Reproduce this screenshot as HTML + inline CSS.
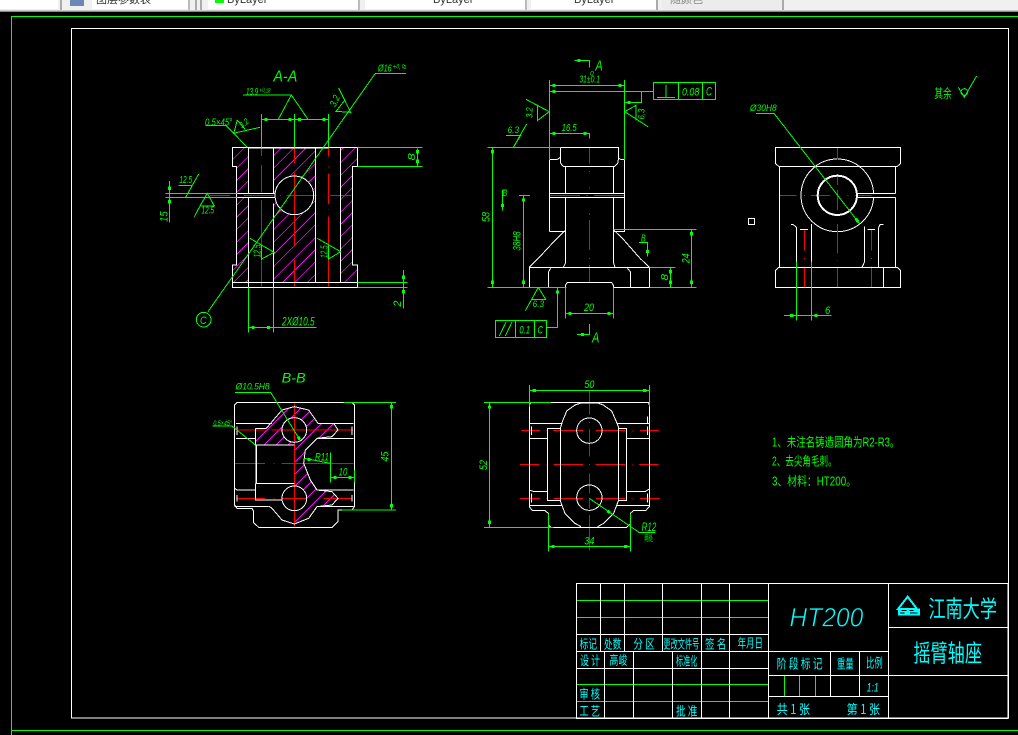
<!DOCTYPE html>
<html lang="zh"><head><meta charset="utf-8"><title>摇臂轴座</title>
<style>
html,body{margin:0;padding:0;background:#000;width:1018px;height:735px;overflow:hidden}
svg{display:block}
path,circle{fill:none;shape-rendering:crispEdges}
.w{stroke:#fff;stroke-width:3}
.r{stroke:#f00;stroke-width:3}
.g{stroke:#0f0;stroke-width:3}
.t{stroke:#0f0;stroke-width:9}
.m{stroke:#f0f;stroke-width:2.6}
text{font-family:"Liberation Sans","WenQuanYi Zen Hei",sans-serif}
.gt text{fill:#0f0;font-style:italic}
.ct text{fill:#0ff;font-family:"WenQuanYi Zen Hei","Noto Sans CJK SC",sans-serif}
.cjk{font-style:normal !important;font-family:"WenQuanYi Zen Hei","Noto Sans CJK SC",sans-serif !important}
</style></head><body>
<svg width="1018" height="735" viewBox="0 0 1018 735" xmlns="http://www.w3.org/2000/svg">
<defs>
<clipPath id="c1"><path d="M247 292H295V697H247V645H260V349H247ZM370 292H496V697H370ZM572 292H622V349H607V645H622V697H572Z"/></clipPath>
<clipPath id="c4"><path d="M166 190H199L216 170L246 135L283 125L326 135L354 175H401L414 195L396 215L351 220L316 255L311 295L331 345L351 375L396 380L414 400L396 420L351 425L326 460L283 477V240H166Z"/></clipPath>
</defs>
<rect width="1018" height="735" fill="#000"/>
<!-- toolbar -->
<rect width="1018" height="10" fill="#f0f0f0"/>
<rect y="10" width="1018" height="1" fill="#c8c8c8"/>
<rect y="11" width="1018" height="1" fill="#8c8c8c"/>
<rect width="58" height="9" fill="#fff"/>
<rect x="60" y="0" width="2" height="10" fill="#aaa"/>
<rect x="70" y="0" width="14" height="6" fill="#6c86b8"/>
<rect x="92" width="96" height="9" fill="#fff"/><rect x="188" width="2" height="10" fill="#bbb"/>
<rect x="195" width="2" height="10" fill="#aaa"/><rect x="200" width="2" height="10" fill="#aaa"/>
<rect x="208" width="150" height="9" fill="#fff"/><rect x="358" width="2" height="10" fill="#bbb"/>
<rect x="365" width="160" height="9" fill="#fff"/><rect x="525" width="2" height="10" fill="#bbb"/>
<rect x="531" width="125" height="9" fill="#fff"/><rect x="656" width="2" height="10" fill="#aaa"/>
<rect x="662" width="120" height="9" fill="#ececec"/><rect x="782" width="2" height="10" fill="#aaa"/>
<rect x="215" y="0" width="9" height="3" fill="#0f0"/>
<text x="96" y="3" font-size="11" fill="#333">图层参数表</text>
<text x="227" y="3" font-size="11" fill="#333">ByLayer</text>
<text x="433" y="3" font-size="11" fill="#333">ByLayer</text>
<text x="574" y="3" font-size="11" fill="#333">ByLayer</text>
<text x="670" y="3" font-size="11" fill="#888">随颜色</text>
<!-- frames -->
<path d="M11.500 735V16.500H1018" stroke="#0f0" stroke-width="1" style="fill:none"/>
<path d="M11 730.500H1018" stroke="#0f0" stroke-width="1" style="fill:none"/>
<rect x="71.500" y="28.500" width="937" height="689.500" fill="none" stroke="#fff" stroke-width="1" shape-rendering="crispEdges"/>

<!-- VIEW 1 -->
<g transform="translate(150,50) scale(.33333)">
<g clip-path="url(#c1)"><path class="m" d="M250 290L-160 700M287 290L-123 700M324 290L-86 700M361 290L-49 700M398 290L-12 700M435 290L25 700M472 290L62 700M509 290L99 700M546 290L136 700M583 290L173 700M620 290L210 700M657 290L247 700M694 290L284 700M731 290L321 700M768 290L358 700M805 290L395 700M842 290L432 700M879 290L469 700M916 290L506 700M953 290L543 700M990 290L580 700M1027 290L617 700"/></g>
<rect x="240" y="431" width="140" height="10" fill="#000"/>
<circle cx="433" cy="436" r="58" style="fill:#000"/>
<path class="r" d="M334 296V318M334 345V428M334 450V710M433 284V340M433 347V348M433 368V590M433 628V710M535 245V320M535 348V350M535 370V462M535 478V480M535 500V590M535 620V710M180 436H240M282 436H370M390 436H393M410 436H500M520 436H522M540 436H605"/>
<path class="w" d="M247 292H622V349H607V645H622V712H247V645H260V349H247ZM247 697H622M295 292V430M295 442V712M370 292V430M370 460V712M496 292V697M572 292V697M260 430H375M260 442H375M295 294H535"/>
<circle class="w" cx="433" cy="436" r="58"/>
<path class="g" d="M334 192V292M535 192V292M433 192V292M334 208H535M279 135H424L385 208M424 135L474 208M166 226H228L292 292M250 250L330 232M262 210L252 248M262 210L285 238M768 70H676L174 785M566 114L602 187L558 184L585 150M622 292H818M622 349H818M802 295V349M46 430H262M46 442H262M58 393V518M85 406H127L107 442L146 372M150 468H193L172 430L150 468L133 500M622 697H773M622 712H773M760 660V776M295 712V848M370 712V848M295 832H500M300 565L372 607L335 627V585M502 565L572 605L536 627V585"/>
<path class="t" d="M344 208h9M415 208h9M444 208h9M517 208h9M802 300v10M802 329v10M58 410v10M58 450v10M760 677v10M760 720v10M305 832h9M351 832h9"/>
<circle class="g" cx="161" cy="809" r="22"/>
<g class="gt">
<text x="370" y="94" font-size="46" textLength="72" lengthAdjust="spacingAndGlyphs">A-A</text>
<text x="288" y="135" font-size="30" textLength="74" lengthAdjust="spacingAndGlyphs">13.9⁺⁰·¹⁸</text>
<text x="684" y="64" font-size="30" textLength="84" lengthAdjust="spacingAndGlyphs">Ø16⁺⁰·⁰¹</text>
<text x="165" y="226" font-size="30" textLength="82" lengthAdjust="spacingAndGlyphs">0.5×45°</text>
<text x="276" y="236" font-size="26" textLength="30" lengthAdjust="spacingAndGlyphs" transform="rotate(-40 276 236)">3.2</text>
<text x="556" y="172" font-size="30" textLength="34" lengthAdjust="spacingAndGlyphs" transform="rotate(-65 556 172)">3.2</text>
<text x="88" y="399" font-size="30" textLength="38" lengthAdjust="spacingAndGlyphs">12.5</text>
<text x="154" y="491" font-size="30" textLength="38" lengthAdjust="spacingAndGlyphs">12.5</text>
<text x="53" y="516" font-size="34" textLength="32" lengthAdjust="spacingAndGlyphs" transform="rotate(-90 53 516)">15</text>
<text x="332" y="622" font-size="30" textLength="38" lengthAdjust="spacingAndGlyphs" transform="rotate(-90 332 622)">12.5</text>
<text x="533" y="624" font-size="30" textLength="38" lengthAdjust="spacingAndGlyphs" transform="rotate(-90 533 624)">12.5</text>
<text x="795" y="332" font-size="30" textLength="22" lengthAdjust="spacingAndGlyphs" transform="rotate(-90 795 332)">8</text>
<text x="753" y="770" font-size="32" textLength="18" lengthAdjust="spacingAndGlyphs" transform="rotate(-90 753 770)">2</text>
<text x="396" y="826" font-size="36" textLength="98" lengthAdjust="spacingAndGlyphs">2XØ10.5</text>
<text x="150" y="822" font-size="34" textLength="20" lengthAdjust="spacingAndGlyphs">C</text>
</g>
</g>

<!-- VIEW 2 -->
<g transform="translate(470,50) scale(.33333)">
<path class="r" d="M358 292V340M358 363V366M358 412V415M240 436H330M372 436H462M348 436H352M358 490V495M358 510V600M358 624V627M358 645V697"/>
<path class="w" d="M271 322V292H446V322L443 340L434 349H280L272 340ZM238 544V328H262L271 322M446 325L452 328H464V544H431M238 544H285M238 430H464M238 442H464M286 349V430M286 442V640L280 652M431 349V430M431 442V640L435 652M284 542L258 568L205 625L178 652V712H286V706L292 697H425L430 706V712H538V652L510 625L460 568L431 540M178 652H538M236 712V665L242 655M481 712V665L472 655"/>
<path class="g" d="M238 90V330M464 90V330M238 106H464M238 124H550M464 157H515V124M550 97H737V149H550ZM626 97V149M698 97V149M561 143H615M588 105V143M313 31H358V53M238 250H358V266M168 148L238 185L202 212V167M534 230L464 185L498 166V212M108 256H152L130 292L170 222M52 292H272M52 712H290M67 292V712M97 420V482M97 420H108M147 436H180M160 436V712M431 538H680M538 712H680M664 538V712M538 652H617M601 652V712M507 577H532V620M205 712L185 748H227L205 712M185 748L166 782M286 712V805M431 712V805M286 790H431M76 811H230V862H76ZM136 811V862M193 811V862M88 858L108 816M106 858L126 816M262 712V832H230M321 853H358V822"/>
<path class="t" d="M248 106h9M445 106h9M248 124h9M473 157h9M323 31h9M248 250h9M340 250h9M67 300v10M67 692v10M97 462v9M160 445v10M160 692v10M664 546v10M664 692v10M601 660v10M601 692v10M532 600v9M296 790h9M412 790h9M262 721v10M333 853h9"/>
<g class="gt">
<text x="376" y="62" font-size="44" textLength="22" lengthAdjust="spacingAndGlyphs">A</text><text x="366" y="877" font-size="44" textLength="22" lengthAdjust="spacingAndGlyphs">A</text>
<text x="328" y="98" font-size="30" textLength="62" lengthAdjust="spacingAndGlyphs">31±0.1</text>
<text x="360" y="76" font-size="20">0</text>
<text x="275" y="243" font-size="30" textLength="45" lengthAdjust="spacingAndGlyphs">16.5</text>
<text x="188" y="204" font-size="28" textLength="32" lengthAdjust="spacingAndGlyphs" transform="rotate(-90 188 204)">3.2</text>
<text x="524" y="208" font-size="28" textLength="32" lengthAdjust="spacingAndGlyphs" transform="rotate(-90 524 208)">6.3</text>
<text x="113" y="249" font-size="28" textLength="34" lengthAdjust="spacingAndGlyphs">6.3</text>
<text x="188" y="771" font-size="28" textLength="34" lengthAdjust="spacingAndGlyphs">6.3</text>
<text x="59" y="516" font-size="34" textLength="30" lengthAdjust="spacingAndGlyphs" transform="rotate(-90 59 516)">58</text>
<text x="152" y="602" font-size="32" textLength="58" lengthAdjust="spacingAndGlyphs" transform="rotate(-90 152 602)">38H8</text>
<text x="658" y="640" font-size="34" textLength="30" lengthAdjust="spacingAndGlyphs" transform="rotate(-90 658 640)">24</text>
<text x="594" y="692" font-size="30" textLength="20" lengthAdjust="spacingAndGlyphs" transform="rotate(-90 594 692)">8</text>
<text x="98" y="438" font-size="28" textLength="14" lengthAdjust="spacingAndGlyphs">B</text><text x="513" y="574" font-size="30" textLength="14" lengthAdjust="spacingAndGlyphs">B</text>
<text x="342" y="783" font-size="34" textLength="30" lengthAdjust="spacingAndGlyphs">20</text>
<text x="636" y="137" font-size="34" textLength="52" lengthAdjust="spacingAndGlyphs">0.08</text>
<text x="708" y="137" font-size="36" textLength="18" lengthAdjust="spacingAndGlyphs">C</text>
<text x="148" y="850" font-size="32" textLength="32" lengthAdjust="spacingAndGlyphs">0.1</text>
<text x="203" y="850" font-size="34" textLength="16" lengthAdjust="spacingAndGlyphs">C</text>
</g>
</g>

<!-- VIEW 3 -->
<g transform="translate(740,70) scale(.33333)">
<circle class="w" cx="292" cy="376" r="109"/>
<rect x="348" y="372" width="118" height="9" fill="#000"/>
<path class="r" d="M292 234V268M292 312V345M292 360V420M292 462V550M292 570V572M292 592V652M120 376H170M192 376H195M213 376H270M322 376H325M345 376H395M193 478V542M193 564V567M193 590V652M394 478V542M394 564V567M394 590V652"/>
<path class="w" d="M116 289L106 280V232H482V280L472 289ZM118 289V592M467 289V370M467 382V592M348 370H467M348 382H467M116 592L106 602V652H482V602L472 592ZM430 592V652M153 464H160L169 472V592M214 462V592M374 470V575L366 592M415 592V475L420 464H431M180 478H204M382 478H405"/>
<circle cx="292" cy="376" r="59" stroke="#fff" stroke-width="6"/>
<path class="g" d="M48 130H102L358 460M169 575V752M214 575V752M132 736H275M655 52L673 82L690 52M690 52L710 18"/>
<circle class="g" cx="673" cy="66" r="10"/>
<path class="t" d="M150 736h10M223 736h10M347 446l8 10"/>
<rect x="25.500" y="445.500" width="18" height="18" fill="none" stroke="#fff" stroke-width="3" shape-rendering="crispEdges"/>
<g class="gt">
<text x="30" y="123" font-size="28" textLength="80" lengthAdjust="spacingAndGlyphs">Ø30H8</text>
<text x="255" y="732" font-size="34" textLength="16" lengthAdjust="spacingAndGlyphs">6</text>
<text x="583" y="84" font-size="38" textLength="52" lengthAdjust="spacingAndGlyphs" class="cjk">其余</text>
</g>
</g>

<!-- VIEW 4 -->
<g transform="translate(200,365) scale(.33333)">
<g clip-path="url(#c4)"><path class="m" d="M260 100L-140 500M296 100L-104 500M332 100L-68 500M368 100L-32 500M404 100L4 500M440 100L40 500M476 100L76 500M512 100L112 500M548 100L148 500M584 100L184 500M620 100L220 500M656 100L256 500M692 100L292 500M728 100L328 500M764 100L364 500"/></g>
<circle cx="283" cy="195" r="37" style="fill:#000"/><circle cx="283" cy="400" r="37" style="fill:#000"/>
<path class="r" d="M283 115V485M110 195H195M215 195H460M104 295H195M220 295H223M245 295H460M110 400H195M220 400H223M245 400H320M370 400H456"/>
<path class="w" d="M104 120L111 113H456L463 120V425L456 435H414V470L396 487H176L161 473V440L156 430H111L104 420ZM108 175H216M108 220H166M354 175H460M351 220H460M104 370L111 375H166M351 375H460M104 425H206M351 425H460M111 185V210M456 185V210M111 390V410M456 390V410M166 190H199L216 170L246 135L283 125L326 135L354 175H401L414 195L396 215L351 220L316 255L311 295L331 345L351 375L396 380L414 400L396 420L351 425L326 460L283 477L246 465L216 430L206 423M166 190V240H283M168 240V355H283M170 240V355M166 355V405H246"/>
<circle class="w" cx="283" cy="195" r="37"/><circle class="w" cx="283" cy="400" r="37"/>
<path class="g" d="M431 113H588M426 435H588M575 113V435M105 82H212L301 227M38 183H96L166 240M313 280L391 295M391 262V352M464 315V352M391 337H464"/>
<path class="t" d="M575 120v10M575 417v10M400 337h9M445 337h9M294 215l5 8M322 284h9"/>
<g class="gt">
<text x="245" y="52" font-size="42" textLength="72" lengthAdjust="spacingAndGlyphs">B-B</text>
<text x="107" y="74" font-size="28" textLength="102" lengthAdjust="spacingAndGlyphs">Ø10.5H8</text>
<text x="40" y="181" font-size="22" textLength="56" lengthAdjust="spacingAndGlyphs">0.5×45°</text>
<text x="345" y="287" font-size="32" textLength="42" lengthAdjust="spacingAndGlyphs">R11</text>
<text x="416" y="331" font-size="32" textLength="26" lengthAdjust="spacingAndGlyphs">10</text>
<text x="566" y="290" font-size="34" textLength="30" lengthAdjust="spacingAndGlyphs" transform="rotate(-90 566 290)">45</text>
</g>
</g>

<!-- VIEW 5 -->
<g transform="translate(475,375) scale(.33333)">
<path class="r" d="M343 48V118M343 141V144M343 162V245M343 267V270M343 295V355M343 372V400M343 420V527M138 166H195M215 166H218M234 166H324M363 166H450M472 166H474M495 166H552M135 268H192M213 268H215M235 268H324M342 268H345M362 268H452M472 268H474M492 268H550M135 370H195M215 370H218M235 370H324M363 370H450M472 370H474M495 370H555"/>
<path class="w" d="M228 82H520L523 90V395L512 407H475L466 415V447L455 457H228L220 450V415L210 407H172L163 395V90L166 84M262 140L275 108L300 90L318 84H368L385 90L410 108L424 140L430 155V378L416 415L386 445L368 455M262 140L256 160V378L270 415L300 445L318 455M163 145H262M163 190H217M425 145H523M455 190H523M217 160H256V376H217ZM430 160H455V376H430ZM163 345L178 350H217M455 350H510L523 342M163 391H262M425 391H523M170 155V180M517 155V180M170 355V382M517 355V382M517 125V145"/>
<circle class="w" cx="343" cy="167" r="38"/><circle class="w" cx="343" cy="368" r="38"/>
<path class="g" d="M163 30V95M523 30V95M163 46H523M27 82H228M27 457H235M43 82V457M220 415V530M466 415V530M220 514H466M343 370L492 472H542"/>
<path class="t" d="M173 46h10M504 46h10M43 91v10M43 437v10M229 514h10M447 514h10M397 408l8 5"/>
<g class="gt">
<text x="328" y="39" font-size="34" textLength="30" lengthAdjust="spacingAndGlyphs">50</text>
<text x="36" y="285" font-size="34" textLength="30" lengthAdjust="spacingAndGlyphs" transform="rotate(-90 36 285)">52</text>
<text x="328" y="508" font-size="34" textLength="30" lengthAdjust="spacingAndGlyphs">34</text>
<text x="500" y="468" font-size="36" textLength="44" lengthAdjust="spacingAndGlyphs">R12</text>
<text x="508" y="498" font-size="24" textLength="26" lengthAdjust="spacingAndGlyphs" class="cjk">两处</text>
</g>
</g>

<!-- NOTES -->
<g transform="translate(760,425) scale(.33333)" fill="#0f0">
<text x="36" y="64" font-size="38" textLength="382" lengthAdjust="spacingAndGlyphs" style="font-family:'WenQuanYi Zen Hei',sans-serif">1、未注名铸造圆角为R2-R3。</text>
<text x="36" y="122" font-size="38" textLength="194" lengthAdjust="spacingAndGlyphs" style="font-family:'WenQuanYi Zen Hei',sans-serif">2、去尖角毛刺。</text>
<text x="36" y="182" font-size="38" textLength="252" lengthAdjust="spacingAndGlyphs" style="font-family:'WenQuanYi Zen Hei',sans-serif">3、材料：HT200。</text>
</g>

<!-- TITLE BLOCK -->
<g transform="translate(570,575) scale(.33333)">
<path class="g" d="M19 76H595M19 127H595M19 328H595M19 379H595M643 301V364M688 301V364M736 301V364"/>
<path class="w" d="M19 25H1314V430H19ZM91 25V229M163 25V229M277 25V229M394 25V430M478 25V430M19 178H595M19 229H955M19 280H595M103 229V430M190 229V430M307 229V430M595 25V430M955 25V430M955 157H1314M955 301H1314M595 301H955M595 364H955M781 229V364M868 229V364"/>
<g class="ct">
<text x="658" y="155" font-size="80" textLength="222" lengthAdjust="spacingAndGlyphs" stroke="#000" stroke-width="2" style="font-family:'Liberation Sans',sans-serif;font-style:italic">HT200</text>
<text x="1075" y="126" font-size="70" textLength="206" lengthAdjust="spacingAndGlyphs">江南大学</text>
<text x="1030" y="260" font-size="72" textLength="206" lengthAdjust="spacingAndGlyphs">摇臂轴座</text>
<text x="29" y="220" font-size="38" textLength="52" lengthAdjust="spacingAndGlyphs">标记</text>
<text x="102" y="220" font-size="38" textLength="52" lengthAdjust="spacingAndGlyphs">处数</text>
<text x="190" y="220" font-size="38" textLength="64" lengthAdjust="spacingAndGlyphs">分 区</text>
<text x="280" y="220" font-size="38" textLength="108" lengthAdjust="spacingAndGlyphs">更改文件号</text>
<text x="405" y="220" font-size="38" textLength="64" lengthAdjust="spacingAndGlyphs">签 名</text>
<text x="503" y="218" font-size="38" textLength="76" lengthAdjust="spacingAndGlyphs">年月日</text>
<text x="30" y="270" font-size="38" textLength="60" lengthAdjust="spacingAndGlyphs">设 计</text>
<text x="118" y="268" font-size="38" textLength="54" lengthAdjust="spacingAndGlyphs">高峻</text>
<text x="318" y="272" font-size="38" textLength="64" lengthAdjust="spacingAndGlyphs">标准化</text>
<text x="28" y="370" font-size="38" textLength="62" lengthAdjust="spacingAndGlyphs">审 核</text>
<text x="28" y="422" font-size="38" textLength="62" lengthAdjust="spacingAndGlyphs">工 艺</text>
<text x="318" y="422" font-size="38" textLength="64" lengthAdjust="spacingAndGlyphs">批 准</text>
<text x="620" y="280" font-size="40" textLength="138" lengthAdjust="spacingAndGlyphs">阶 段 标 记</text>
<text x="801" y="280" font-size="40" textLength="50" lengthAdjust="spacingAndGlyphs">重量</text>
<text x="888" y="278" font-size="40" textLength="50" lengthAdjust="spacingAndGlyphs">比例</text>
<text x="890" y="350" font-size="36" textLength="36" lengthAdjust="spacingAndGlyphs" style="font-style:italic;font-family:'Liberation Sans',sans-serif">1:1</text>
<text x="620" y="417" font-size="40" textLength="100" lengthAdjust="spacingAndGlyphs">共 1 张</text>
<text x="830" y="417" font-size="40" textLength="100" lengthAdjust="spacingAndGlyphs">第 1 张</text>
</g>
<path d="M1013 65L984 102H1041Z" stroke="#0ff" stroke-width="6" style="fill:none"/>
<path d="M984 100H1050V122H984Z" style="fill:#0ff"/>
<path d="M994 106H1010M1018 106H1030M990 114H1004M1020 114H1042" stroke="#000" stroke-width="3" style="fill:none"/>
</g>
</svg>
</body></html>
